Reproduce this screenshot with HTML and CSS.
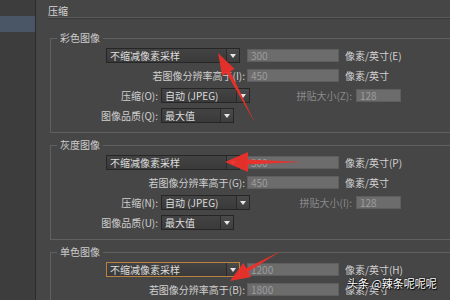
FILE: index.html
```html
<!DOCTYPE html>
<html lang="zh">
<head>
<meta charset="utf-8">
<title>压缩</title>
<link rel="stylesheet" href="styles.css">
</head>
<body>
<div class="app">
  <aside class="sidebar"><div class="nav-item"></div></aside>
  <main class="main">
    <div class="section-title">压缩</div>

    <fieldset class="group">
      <legend>彩色图像</legend>
      <div class="row">
        <div class="select select-sample"><span class="select-text">不缩减像素采样</span><span class="select-btn"><i class="caret"></i></span></div>
        <div class="input input-res">300</div>
        <span class="unit">像素/英寸(E)</span>
      </div>
      <div class="row">
        <span class="label label-long">若图像分辨率高于(I):</span>
        <div class="input input-res">450</div>
        <span class="unit">像素/英寸</span>
      </div>
      <div class="row">
        <span class="label label-short">压缩(O):</span>
        <div class="select select-comp"><span class="select-text">自动 (JPEG)</span><span class="select-btn"><i class="caret"></i></span></div>
        <span class="label label-tile">拼贴大小(Z):</span>
        <div class="input input-tile">128</div>
      </div>
      <div class="row">
        <span class="label label-short">图像品质(Q):</span>
        <div class="select select-qual"><span class="select-text">最大值</span><span class="select-btn"><i class="caret"></i></span></div>
      </div>
    </fieldset>

    <fieldset class="group">
      <legend>灰度图像</legend>
      <div class="row">
        <div class="select select-sample"><span class="select-text">不缩减像素采样</span><span class="select-btn"><i class="caret"></i></span></div>
        <div class="input input-res">300</div>
        <span class="unit">像素/英寸(P)</span>
      </div>
      <div class="row">
        <span class="label label-long">若图像分辨率高于(G):</span>
        <div class="input input-res">450</div>
        <span class="unit">像素/英寸</span>
      </div>
      <div class="row">
        <span class="label label-short">压缩(N):</span>
        <div class="select select-comp"><span class="select-text">自动 (JPEG)</span><span class="select-btn"><i class="caret"></i></span></div>
        <span class="label label-tile">拼贴大小(I):</span>
        <div class="input input-tile">128</div>
      </div>
      <div class="row">
        <span class="label label-short">图像品质(U):</span>
        <div class="select select-qual"><span class="select-text">最大值</span><span class="select-btn"><i class="caret"></i></span></div>
      </div>
    </fieldset>

    <fieldset class="group group-last">
      <legend>单色图像</legend>
      <div class="row">
        <div class="select select-sample select-focus"><span class="select-text">不缩减像素采样</span><span class="select-btn"><i class="caret"></i></span></div>
        <div class="input input-res">1200</div>
        <span class="unit">像素/英寸(H)</span>
      </div>
      <div class="row">
        <span class="label label-long">若图像分辨率高于(B):</span>
        <div class="input input-res">1800</div>
        <span class="unit">像素/英寸</span>
      </div>
    </fieldset>
  </main>
</div>

<svg class="arrows" width="450" height="300" viewBox="0 0 450 300" aria-hidden="true">
  <polygon points="218,53 234.6,69.1 230.2,71.5 255,123 226.6,73.3 222.2,75.7"/>
  <polygon points="225,162 248,152 248,159.5 302,162 248,164.5 248,172"/>
  <polygon points="230,281 251.3,276.9 248.3,271.7 281,251 246.3,268.3 243.3,263.1"/>
</svg>

<div class="watermark">头条 @辣条呢呢呢</div>
</body>
</html>
```

FILE: styles.css
```css
html, body {
  margin: 0;
  padding: 0;
  width: 450px;
  height: 300px;
  overflow: hidden;
  background: #464646;
  font-family: "Noto Sans CJK SC", "Noto Sans", sans-serif;
  font-size: 10px;
  color: #d2d2d2;
}

.app {
  display: flex;
  height: 300px;
  overflow: hidden;
}

.sidebar {
  width: 35px;
  flex: none;
  background: #3d3d3d;
  border-right: 1px solid #2c2c2c;
}

.nav-item {
  margin-top: 16px;
  height: 16px;
  background: #4a5566;
}

.main {
  flex: 1;
  padding-left: 12px;
  min-width: 0;
  overflow: hidden;
}

.section-title {
  padding-top: 5px;
  line-height: 12px;
  border-bottom: 1px solid #5c5c5c;
  box-shadow: 0 1px 0 #393939;
  color: #d6d6d6;
}

.group {
  margin: 14px -40px 0 2px;
  padding: 4px 0 9px 0;
  border: 1px solid #606060;
  min-width: 0;
}

.group + .group {
  margin-top: 6px;
}

.group-last {
  margin-top: 7px;
}

.group legend {
  margin-left: 6px;
  padding: 0 3px;
  line-height: 12px;
  color: #cdcdcd;
}

.row {
  display: flex;
  align-items: center;
  height: 15px;
  line-height: 15px;
  white-space: nowrap;
}

.row + .row {
  margin-top: 5px;
}

.label {
  text-align: right;
  color: #cfcfcf;
}

.label-long {
  width: 194px;
  margin-right: 2px;
}

.label-short {
  width: 107px;
  margin-right: 3px;
}

.label-tile {
  width: 102px;
  margin-right: 4px;
  color: #8a8a8a;
}

.select {
  display: flex;
  box-sizing: border-box;
  height: 15px;
  border: 1px solid #262626;
  background: linear-gradient(#434343, #3a3a3a);
  color: #dedede;
}

.select-text {
  flex: 1;
  padding-left: 3px;
  line-height: 13px;
  overflow: hidden;
}

.select-btn {
  width: 12px;
  border-left: 1px solid #2a2a2a;
  background: linear-gradient(#4a4a4a, #3e3e3e);
  display: flex;
  align-items: center;
  justify-content: center;
}

.caret {
  width: 0;
  height: 0;
  border-left: 3px solid transparent;
  border-right: 3px solid transparent;
  border-top: 4px solid #e6e6e6;
}

.select-sample {
  width: 134px;
  margin-left: 55px;
  margin-right: 7px;
}

.select-focus {
  border-color: #b9823f;
}

.select-comp {
  width: 89px;
}

.select-qual {
  width: 73px;
}

.input {
  box-sizing: border-box;
  height: 13px;
  line-height: 11px;
  padding-left: 3px;
  background: #6c6c6c;
  border: 1px solid #5e5e5e;
  color: #9d9d9d;
}

.input-res {
  width: 92px;
  margin-right: 6px;
}

.input-tile {
  width: 45px;
}

.unit {
  color: #d2d2d2;
}

.arrows {
  position: absolute;
  left: 0;
  top: 0;
  pointer-events: none;
}

.arrows polygon {
  fill: #ec2f2a;
  opacity: 0.95;
}

.watermark {
  position: absolute;
  left: 347px;
  top: 276px;
  font-size: 11px;
  line-height: 14px;
  color: #ffffff;
  text-shadow: 0 0 2px #000, 1px 1px 1px #000;
  white-space: nowrap;
}
```
